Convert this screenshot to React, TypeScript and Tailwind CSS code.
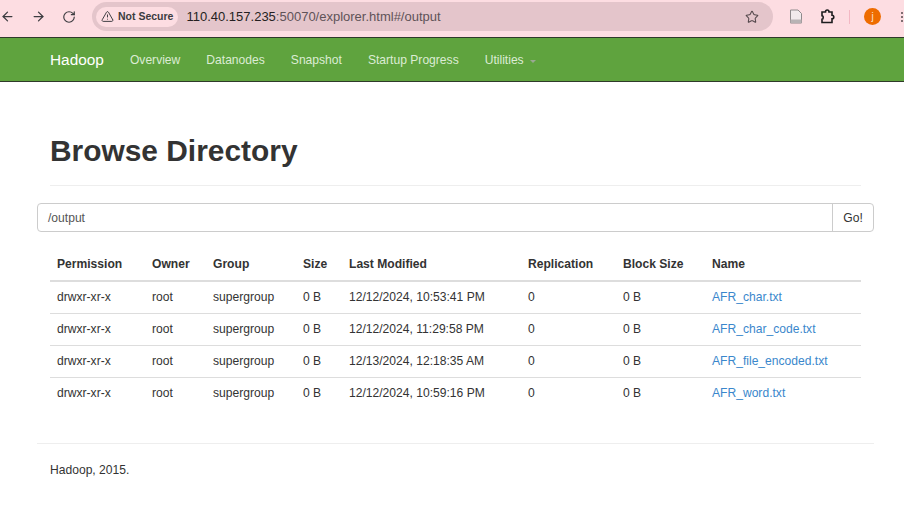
import { ArrowLeft, ArrowRight, RotateCw, TriangleAlert, Star } from 'lucide-react';

const rows = [
  { modified: '12/12/2024, 10:53:41 PM', name: 'AFR_char.txt' },
  { modified: '12/12/2024, 11:29:58 PM', name: 'AFR_char_code.txt' },
  { modified: '12/13/2024, 12:18:35 AM', name: 'AFR_file_encoded.txt' },
  { modified: '12/12/2024, 10:59:16 PM', name: 'AFR_word.txt' },
];

const navItems = ['Overview', 'Datanodes', 'Snapshot', 'Startup Progress'];

const headers = [
  ['Permission', 'w-[95px]'],
  ['Owner', 'w-[61px]'],
  ['Group', 'w-[90px]'],
  ['Size', 'w-[46px]'],
  ['Last Modified', 'w-[179px]'],
  ['Replication', 'w-[95px]'],
  ['Block Size', 'w-[89px]'],
  ['Name', ''],
];

const BrowserBar = () => (
  <div className="flex h-[37px] items-center bg-[#fddde2] pb-[4px] text-[#3c3c40]">
    <div className="flex w-[92px] items-center">
      <ArrowLeft size={15} strokeWidth={2} />
      <ArrowRight size={15} strokeWidth={2} className="ml-[16px]" />
      <RotateCw size={14} strokeWidth={2} className="ml-[16px]" />
    </div>
    <div className="flex h-[29px] w-[681px] items-center rounded-full bg-[#e4c5cb] pl-[4px] pr-[14px]">
      <div className="flex h-[20px] items-center gap-[4px] rounded-full bg-[#fddde2] px-[5px] text-[10.5px] font-bold">
        <TriangleAlert size={13} strokeWidth={1.8} />
        Not Secure
      </div>
      <div className="ml-[8px] flex-1 text-[13px] text-[#5f5358]">
        <span className="text-[#241f21]">110.40.157.235</span>:50070/explorer.html#/output
      </div>
      <Star size={14} strokeWidth={1.8} className="text-[#55494d]" />
    </div>
    <svg width="14" height="15" viewBox="0 0 14 15" className="ml-[16px]">
      <path d="M1.5 1h7.5l3.5 3.5V14h-11z" fill="#f1eaec" stroke="#8f8a8c" />
      <path d="M1.5 10.5h11V14h-11z" fill="#b8b3b5" />
    </svg>
    <svg width="16" height="15" viewBox="0 0 16 15" fill="none" stroke="#1c1c1e" strokeWidth="1.6" className="ml-[16px]">
      <path d="M3 3h3.5c0-2.6 3.5-2.6 3.5 0h3v3.2c2.4 0 2.4 3.6 0 3.6V13.5H3v-3.2c1.6 0 1.6-3.6 0-3.6z" />
    </svg>
    <div className="ml-[14px] h-[14px] w-[1px] bg-[#f3b8c4]" />
    <div className="ml-[14px] flex h-[17px] w-[17px] items-center justify-center rounded-full bg-[#ee6c00] text-[10px] text-[#fde3cf]">
      j
    </div>
    <div className="ml-[20px] flex flex-col gap-[2px]">
      <div className="h-[2px] w-[2px] rounded-full bg-[#55494d]" />
      <div className="h-[2px] w-[2px] rounded-full bg-[#55494d]" />
      <div className="h-[2px] w-[2px] rounded-full bg-[#55494d]" />
    </div>
  </div>
);

const NavBar = () => (
  <div className="flex h-[45px] items-center border-y border-y-[#2f3a2a] bg-[#5fa33e] pl-[50px] pt-[1px] text-[12.1px] text-[#dcecd4]">
    <span className="mr-[26px] text-[15.4px] text-white">Hadoop</span>
    {navItems.map((item) => (
      <span key={item} className="mr-[26px]">{item}</span>
    ))}
    <span>Utilities</span>
    <span className="ml-[6px] mt-[2px] h-0 w-0 border-x-[3px] border-t-[3px] border-x-transparent border-t-[#9aa893]" />
  </div>
);

export default function App() {
  return (
    <div className="h-[512px] overflow-hidden bg-white font-['Liberation_Sans',Arial,sans-serif] text-[#333]">
      <BrowserBar />
      <NavBar />
      <div className="mx-[37px] flex w-[837px] flex-col pt-[49px]">
        <div className="mx-[13px] border-b border-[#eee] pb-[14px]">
          <h1 className="text-[29.9px] font-bold leading-[40px]">Browse Directory</h1>
        </div>
        <div className="mt-[17px] flex h-[29px] rounded-[4px] border border-[#ccc] pt-[1px] text-[12.1px]">
          <div className="flex flex-1 items-center pl-[10px] text-[#555]">/output</div>
          <div className="-mt-[1px] flex w-[41px] items-center justify-center border-l border-[#ccc] pt-[1px]">Go!</div>
        </div>
        <table className="mx-[13px] mt-[17px] w-[811px] table-fixed border-collapse text-[12.1px]">
          <thead>
            <tr className="h-[32px] border-b-2 border-[#ddd]">
              {headers.map(([label, width]) => (
                <th key={label} className={`${width} px-[7px] text-left font-bold`}>{label}</th>
              ))}
            </tr>
          </thead>
          <tbody>
            {rows.map((row) => (
              <tr key={row.name} className="h-[32px] border-b border-[#ddd] last:border-b-0">
                <td className="px-[7px]">drwxr-xr-x</td>
                <td className="px-[7px]">root</td>
                <td className="px-[7px]">supergroup</td>
                <td className="px-[7px]">0 B</td>
                <td className="px-[7px]">{row.modified}</td>
                <td className="px-[7px]">0</td>
                <td className="px-[7px]">0 B</td>
                <td className="px-[7px] text-[#3a87cc]">{row.name}</td>
              </tr>
            ))}
          </tbody>
        </table>
        <div className="mt-[34px] border-t border-[#eee] pl-[13px] pt-[17px] text-[12.1px]">Hadoop, 2015.</div>
      </div>
    </div>
  );
}
